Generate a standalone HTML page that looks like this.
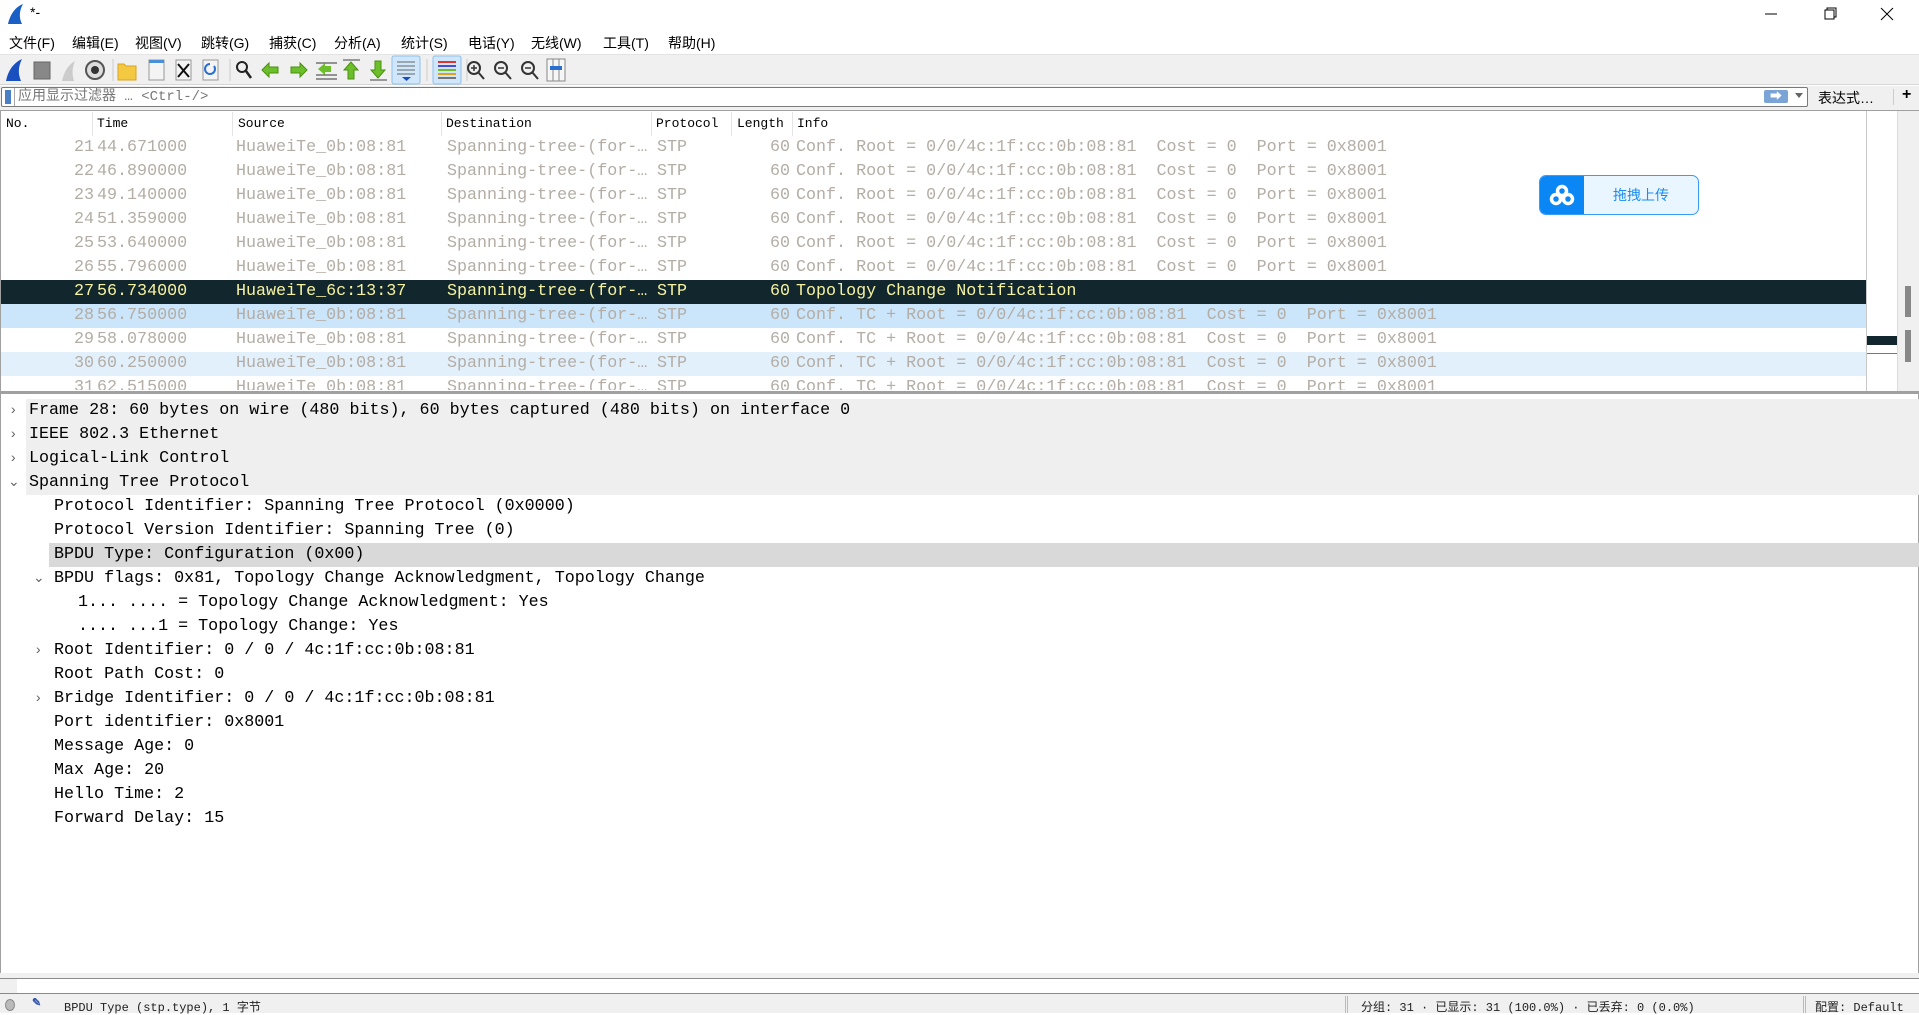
<!DOCTYPE html>
<html><head><meta charset="utf-8">
<style>
*{margin:0;padding:0;box-sizing:border-box}
body{width:1919px;height:1013px;overflow:hidden;background:#fff;position:relative;font-family:"Liberation Sans","Noto Sans CJK SC",sans-serif;}
.a{position:absolute;white-space:pre}
.menu{font-size:14px;top:33px;color:#000}
.mono{font-family:"Liberation Mono","Noto Sans CJK SC",monospace}
.row{position:absolute;left:0;width:1866px;height:24px;font-family:"Liberation Mono",monospace;font-size:16.7px;line-height:24px;color:#b3ada5}
.row span{position:absolute;white-space:pre;top:0}
.d{position:absolute;left:0;width:1919px;height:24px;font-family:"Liberation Mono",monospace;font-size:16.7px;line-height:24px;color:#000}
.d span{position:absolute;white-space:pre;top:0}
.arr{color:#666;font-size:14px}
.hd span{position:absolute;top:0;white-space:pre}
</style></head><body>
<!-- title bar -->
<svg class="a" style="left:6px;top:3px" width="20" height="22" viewBox="0 0 20 22"><path d="M2 21 C4 12 9 4 17 1 C13 8 13 15 16 21 Z" fill="#1a5fc6"/></svg>
<div class="a" style="left:30px;top:4px;font-size:14px">*-</div>
<svg class="a" style="left:1763px;top:6px" width="140" height="16"><line x1="2" y1="8" x2="14" y2="8" stroke="#000"/><rect x="62" y="4" width="9" height="9" fill="none" stroke="#000"/><path d="M64 4V2h9v9h-2" fill="none" stroke="#000"/><path d="M118 2l12 12M130 2l-12 12" stroke="#000"/></svg>
<!-- menu -->
<div class="a menu" style="left:9px">文件(F)</div>
<div class="a menu" style="left:72px">编辑(E)</div>
<div class="a menu" style="left:135px">视图(V)</div>
<div class="a menu" style="left:201px">跳转(G)</div>
<div class="a menu" style="left:269px">捕获(C)</div>
<div class="a menu" style="left:334px">分析(A)</div>
<div class="a menu" style="left:401px">统计(S)</div>
<div class="a menu" style="left:468px">电话(Y)</div>
<div class="a menu" style="left:531px">无线(W)</div>
<div class="a menu" style="left:603px">工具(T)</div>
<div class="a menu" style="left:668px">帮助(H)</div>
<!-- toolbar -->
<div class="a" style="left:0;top:54px;width:1919px;height:31px;background:#f0f0f0;border-top:1px solid #e3e3e3;border-bottom:1px solid #d6d6d6"></div>
<svg class="a" style="left:0;top:55px" width="580" height="30" viewBox="0 0 580 30">
<path d="M6 26 C8 16 13 8 22 4 C18 12 18 19 21 26 Z" fill="#1a4fc0"/>
<rect x="34" y="7" width="16" height="17" fill="#888" stroke="#666"/>
<path d="M62 26 C64 17 68 10 75 6 C72 13 72 19 74 26 Z" fill="#ccc"/>
<circle cx="95" cy="15" r="9" fill="#ddd" stroke="#555" stroke-width="2"/><circle cx="95" cy="15" r="4" fill="#333"/>
<line x1="113" y1="4" x2="113" y2="26" stroke="#ccc"/>
<path d="M118 9h6l2 2h10v14h-18z" fill="#f5c842" stroke="#d9a520"/>
<rect x="149" y="5" width="15" height="20" fill="#f4f4f4" stroke="#999"/><rect x="149" y="5" width="15" height="3" fill="#4a90d9"/>
<rect x="176" y="5" width="15" height="20" fill="#f4f4f4" stroke="#999"/><path d="M178 9l11 13M189 9l-11 13" stroke="#111" stroke-width="2"/>
<rect x="203" y="5" width="15" height="20" fill="#f4f4f4" stroke="#999"/><path d="M214 11a5 5 0 1 1 -4 -2" fill="none" stroke="#2a6fd0" stroke-width="2"/>
<line x1="230" y1="4" x2="230" y2="26" stroke="#ccc"/>
<circle cx="242" cy="12" r="5" fill="none" stroke="#222" stroke-width="2"/><line x1="246" y1="16" x2="251" y2="23" stroke="#222" stroke-width="2.5"/>
<path d="M262 15l7-7v4h9v6h-9v4z" fill="#6cbf2a" stroke="#4a9010"/>
<path d="M307 15l-7-7v4h-9v6h9v4z" fill="#6cbf2a" stroke="#4a9010"/>
<g stroke="#333"><line x1="316" y1="8" x2="337" y2="8"/><line x1="316" y1="20" x2="337" y2="20"/><line x1="316" y1="24" x2="337" y2="24"/></g><path d="M318 14l7-6v3h6v6h-6v3z" fill="#6cbf2a"/>
<line x1="343" y1="5" x2="360" y2="5" stroke="#999" stroke-width="2"/><path d="M351 7l-7 8h4v9h6v-9h4z" fill="#6cbf2a" stroke="#4a9010"/>
<line x1="370" y1="25" x2="387" y2="25" stroke="#999" stroke-width="2"/><path d="M378 23l-7-8h4v-9h6v9h4z" fill="#6cbf2a" stroke="#4a9010"/>
<rect x="392" y="1" width="28" height="28" rx="2" fill="#cfe6fb" stroke="#8cc0ee"/><g stroke="#666"><line x1="397" y1="7" x2="415" y2="7"/><line x1="397" y1="11" x2="415" y2="11"/><line x1="397" y1="15" x2="415" y2="15"/><line x1="397" y1="19" x2="415" y2="19"/></g><path d="M402 22h9l-4.5 4z" fill="#1a4fc0"/>
<line x1="427" y1="4" x2="427" y2="26" stroke="#ccc"/>
<rect x="433" y="1" width="28" height="28" rx="2" fill="#cfe6fb" stroke="#8cc0ee"/><line x1="438" y1="7" x2="456" y2="7" stroke="#d33" stroke-width="2"/><line x1="438" y1="11" x2="456" y2="11" stroke="#4a4ad0" stroke-width="2"/><line x1="438" y1="15" x2="456" y2="15" stroke="#6cbf2a" stroke-width="2"/><line x1="438" y1="19" x2="456" y2="19" stroke="#e0a020" stroke-width="2"/><line x1="438" y1="23" x2="456" y2="23" stroke="#777" stroke-width="2"/>
<line x1="467" y1="4" x2="467" y2="26" stroke="#ccc"/>
<g fill="none" stroke="#333" stroke-width="2"><circle cx="474" cy="13" r="6"/><line x1="478" y1="17" x2="484" y2="24"/><circle cx="501" cy="13" r="6"/><line x1="505" y1="17" x2="511" y2="24"/><circle cx="528" cy="13" r="6"/><line x1="532" y1="17" x2="538" y2="24"/></g>
<path d="M471 13h6M474 10v6M498 13h6M525 13h6" stroke="#333" stroke-width="1.5"/>
<rect x="547" y="4" width="18" height="22" fill="#f6f6f6" stroke="#888"/><line x1="553" y1="4" x2="553" y2="26" stroke="#888"/><line x1="559" y1="4" x2="559" y2="26" stroke="#888"/><rect x="550" y="11" width="12" height="4" fill="#2a6fd0"/>
</svg>
<!-- filter bar -->
<div class="a" style="left:0;top:86px;width:1919px;height:24px;background:#f0f0f0"></div>
<div class="a" style="left:1px;top:87px;width:1807px;height:20px;background:#fff;border:1px solid #7a7a7a;border-radius:2px"></div>
<div class="a" style="left:5px;top:90px;width:6px;height:14px;background:#4b7fc4"></div>
<div class="a" style="left:14px;top:88px;width:1px;height:18px;background:#aaa"></div>
<div class="a mono" style="left:18px;top:88px;font-size:14px;line-height:18px;color:#777">应用显示过滤器 … &lt;Ctrl-/&gt;</div>
<div class="a" style="left:1764px;top:90px;width:24px;height:13px;background:#7aa3d6;border-radius:2px;color:#fff;font-size:12px;line-height:13px;text-align:center">➡</div>
<div class="a" style="left:1795px;top:93px;width:0;height:0;border-left:4px solid transparent;border-right:4px solid transparent;border-top:5px solid #666"></div>
<div class="a" style="left:1818px;top:88px;font-size:14px">表达式…</div>
<div class="a" style="left:1893px;top:89px;width:1px;height:16px;background:#ccc"></div>
<div class="a" style="left:1902px;top:86px;font-size:16px;font-weight:bold">+</div>
<!-- packet list -->
<div class="a" style="left:0;top:110px;width:1919px;height:282px;border-top:1px solid #a0a0a0;border-bottom:1px solid #a0a0a0;border-left:1px solid #a0a0a0"></div>
<div class="a mono hd" style="left:0;top:112px;width:1866px;height:24px;font-size:13px;line-height:24px">
<span style="left:6px">No.</span><span style="left:97px">Time</span><span style="left:238px">Source</span><span style="left:446px">Destination</span><span style="left:656px">Protocol</span><span style="left:737px">Length</span><span style="left:797px">Info</span>
<span style="left:92px;width:1px;height:24px;background:#e4e4e4"></span><span style="left:232px;width:1px;height:24px;background:#e4e4e4"></span><span style="left:441px;width:1px;height:24px;background:#e4e4e4"></span><span style="left:651px;width:1px;height:24px;background:#e4e4e4"></span><span style="left:731px;width:1px;height:24px;background:#e4e4e4"></span><span style="left:792px;width:1px;height:24px;background:#e4e4e4"></span>
</div>
<div class="a" style="left:1px;top:136px;width:1865px;height:254px;overflow:hidden">
<div class="row" style="top:0"><span style="right:1773px">21</span><span style="left:96px">44.671000</span><span style="left:235px">HuaweiTe_0b:08:81</span><span style="left:446px">Spanning-tree-(for-…</span><span style="left:656px">STP</span><span style="right:1077px">60</span><span style="left:795px">Conf. Root = 0/0/4c:1f:cc:0b:08:81  Cost = 0  Port = 0x8001</span></div>
<div class="row" style="top:24px"><span style="right:1773px">22</span><span style="left:96px">46.890000</span><span style="left:235px">HuaweiTe_0b:08:81</span><span style="left:446px">Spanning-tree-(for-…</span><span style="left:656px">STP</span><span style="right:1077px">60</span><span style="left:795px">Conf. Root = 0/0/4c:1f:cc:0b:08:81  Cost = 0  Port = 0x8001</span></div>
<div class="row" style="top:48px"><span style="right:1773px">23</span><span style="left:96px">49.140000</span><span style="left:235px">HuaweiTe_0b:08:81</span><span style="left:446px">Spanning-tree-(for-…</span><span style="left:656px">STP</span><span style="right:1077px">60</span><span style="left:795px">Conf. Root = 0/0/4c:1f:cc:0b:08:81  Cost = 0  Port = 0x8001</span></div>
<div class="row" style="top:72px"><span style="right:1773px">24</span><span style="left:96px">51.359000</span><span style="left:235px">HuaweiTe_0b:08:81</span><span style="left:446px">Spanning-tree-(for-…</span><span style="left:656px">STP</span><span style="right:1077px">60</span><span style="left:795px">Conf. Root = 0/0/4c:1f:cc:0b:08:81  Cost = 0  Port = 0x8001</span></div>
<div class="row" style="top:96px"><span style="right:1773px">25</span><span style="left:96px">53.640000</span><span style="left:235px">HuaweiTe_0b:08:81</span><span style="left:446px">Spanning-tree-(for-…</span><span style="left:656px">STP</span><span style="right:1077px">60</span><span style="left:795px">Conf. Root = 0/0/4c:1f:cc:0b:08:81  Cost = 0  Port = 0x8001</span></div>
<div class="row" style="top:120px"><span style="right:1773px">26</span><span style="left:96px">55.796000</span><span style="left:235px">HuaweiTe_0b:08:81</span><span style="left:446px">Spanning-tree-(for-…</span><span style="left:656px">STP</span><span style="right:1077px">60</span><span style="left:795px">Conf. Root = 0/0/4c:1f:cc:0b:08:81  Cost = 0  Port = 0x8001</span></div>
<div class="row" style="top:144px;background:#12262e;color:#f6f3a0"><span style="right:1773px">27</span><span style="left:96px">56.734000</span><span style="left:235px">HuaweiTe_6c:13:37</span><span style="left:446px">Spanning-tree-(for-…</span><span style="left:656px">STP</span><span style="right:1077px">60</span><span style="left:795px">Topology Change Notification</span></div>
<div class="row" style="top:168px;background:#cbe5fa"><span style="right:1773px">28</span><span style="left:96px">56.750000</span><span style="left:235px">HuaweiTe_0b:08:81</span><span style="left:446px">Spanning-tree-(for-…</span><span style="left:656px">STP</span><span style="right:1077px">60</span><span style="left:795px">Conf. TC + Root = 0/0/4c:1f:cc:0b:08:81  Cost = 0  Port = 0x8001</span></div>
<div class="row" style="top:192px"><span style="right:1773px">29</span><span style="left:96px">58.078000</span><span style="left:235px">HuaweiTe_0b:08:81</span><span style="left:446px">Spanning-tree-(for-…</span><span style="left:656px">STP</span><span style="right:1077px">60</span><span style="left:795px">Conf. TC + Root = 0/0/4c:1f:cc:0b:08:81  Cost = 0  Port = 0x8001</span></div>
<div class="row" style="top:216px;background:#e2f0fc"><span style="right:1773px">30</span><span style="left:96px">60.250000</span><span style="left:235px">HuaweiTe_0b:08:81</span><span style="left:446px">Spanning-tree-(for-…</span><span style="left:656px">STP</span><span style="right:1077px">60</span><span style="left:795px">Conf. TC + Root = 0/0/4c:1f:cc:0b:08:81  Cost = 0  Port = 0x8001</span></div>
<div class="row" style="top:240px"><span style="right:1773px">31</span><span style="left:96px">62.515000</span><span style="left:235px">HuaweiTe_0b:08:81</span><span style="left:446px">Spanning-tree-(for-…</span><span style="left:656px">STP</span><span style="right:1077px">60</span><span style="left:795px">Conf. TC + Root = 0/0/4c:1f:cc:0b:08:81  Cost = 0  Port = 0x8001</span></div>
</div>
<!-- minimap / scrollbar -->
<div class="a" style="left:1866px;top:111px;width:1px;height:280px;background:#c8c8c8"></div>
<div class="a" style="left:1867px;top:336px;width:30px;height:9px;background:#12262e"></div>
<div class="a" style="left:1867px;top:353px;width:30px;height:1px;background:#3a86d6"></div>
<div class="a" style="left:1897px;top:111px;width:22px;height:280px;background:#f0f0f0;border-left:1px solid #ddd"></div>
<div class="a" style="left:1905px;top:286px;width:6px;height:31px;background:#888"></div>
<div class="a" style="left:1905px;top:330px;width:6px;height:32px;background:#888"></div>
<!-- baidu button -->
<div class="a" style="left:1539px;top:175px;width:160px;height:40px;border:1px solid #3a9bf5;border-radius:7px;background:#eaf6ff;overflow:hidden">
<div class="a" style="left:0;top:0;width:44px;height:38px;background:#0a86f5"></div>
<svg class="a" style="left:9px;top:8px" width="26" height="22"><g fill="none" stroke="#fff" stroke-width="3.5"><circle cx="13" cy="7" r="4.5"/><circle cx="7" cy="15" r="4.5"/><circle cx="19" cy="15" r="4.5"/></g></svg>
<div class="a" style="left:44px;top:0;width:114px;line-height:38px;text-align:center;color:#1a8cf0;font-size:14px">拖拽上传</div>
</div>
<!-- detail pane -->
<div class="a" style="left:0;top:392px;width:1919px;height:583px;border:1px solid #a0a0a0;border-top:2px solid #a0a0a0"></div>
<div class="d" style="top:399px"><span style="left:26px;width:1893px;height:24px;background:#efefef"></span><span class="arr" style="left:9px">›</span><span style="left:29px">Frame 28: 60 bytes on wire (480 bits), 60 bytes captured (480 bits) on interface 0</span></div>
<div class="d" style="top:423px"><span style="left:26px;width:1893px;height:24px;background:#efefef"></span><span class="arr" style="left:9px">›</span><span style="left:29px">IEEE 802.3 Ethernet</span></div>
<div class="d" style="top:447px"><span style="left:26px;width:1893px;height:24px;background:#efefef"></span><span class="arr" style="left:9px">›</span><span style="left:29px">Logical-Link Control</span></div>
<div class="d" style="top:471px"><span style="left:26px;width:1893px;height:24px;background:#efefef"></span><span class="arr" style="left:8px">⌄</span><span style="left:29px">Spanning Tree Protocol</span></div>
<div class="d" style="top:495px"><span style="left:54px">Protocol Identifier: Spanning Tree Protocol (0x0000)</span></div>
<div class="d" style="top:519px"><span style="left:54px">Protocol Version Identifier: Spanning Tree (0)</span></div>
<div class="d" style="top:543px"><span style="left:49px;width:1870px;height:24px;background:#d9d9d9"></span><span style="left:54px">BPDU Type: Configuration (0x00)</span></div>
<div class="d" style="top:567px"><span class="arr" style="left:33px">⌄</span><span style="left:54px">BPDU flags: 0x81, Topology Change Acknowledgment, Topology Change</span></div>
<div class="d" style="top:591px"><span style="left:78px">1... .... = Topology Change Acknowledgment: Yes</span></div>
<div class="d" style="top:615px"><span style="left:78px">.... ...1 = Topology Change: Yes</span></div>
<div class="d" style="top:639px"><span class="arr" style="left:34px">›</span><span style="left:54px">Root Identifier: 0 / 0 / 4c:1f:cc:0b:08:81</span></div>
<div class="d" style="top:663px"><span style="left:54px">Root Path Cost: 0</span></div>
<div class="d" style="top:687px"><span class="arr" style="left:34px">›</span><span style="left:54px">Bridge Identifier: 0 / 0 / 4c:1f:cc:0b:08:81</span></div>
<div class="d" style="top:711px"><span style="left:54px">Port identifier: 0x8001</span></div>
<div class="d" style="top:735px"><span style="left:54px">Message Age: 0</span></div>
<div class="d" style="top:759px"><span style="left:54px">Max Age: 20</span></div>
<div class="d" style="top:783px"><span style="left:54px">Hello Time: 2</span></div>
<div class="d" style="top:807px"><span style="left:54px">Forward Delay: 15</span></div>
<!-- bytes pane -->
<div class="a" style="left:0;top:973px;width:1919px;height:5px;background:#f0f0f0"></div>
<div class="a" style="left:0;top:978px;width:1919px;height:16px;background:#fff;border-top:1px solid #8a8a8a;border-bottom:1px solid #8a8a8a"></div>
<div class="a" style="left:0;top:979px;width:17px;height:14px;background:#f0f0f0"></div>
<!-- status bar -->
<div class="a" style="left:0;top:994px;width:1919px;height:19px;background:#f0f0f0"></div>
<div class="a" style="left:5px;top:999px;width:10px;height:12px;border-radius:50%;background:#bbb;border:1px solid #888"></div>
<div class="a" style="left:32px;top:996px;font-size:11px;color:#3355aa;font-weight:bold">✎</div>
<div class="a mono" style="left:64px;top:998px;font-size:12px;color:#222">BPDU Type (stp.type), 1 字节</div>
<div class="a" style="left:1345px;top:996px;width:3px;height:17px;border-left:1px solid #bbb;border-right:1px solid #bbb"></div>
<div class="a mono" style="left:1361px;top:998px;font-size:12px;color:#222">分组: 31 · 已显示: 31 (100.0%) · 已丢弃: 0 (0.0%)</div>
<div class="a" style="left:1803px;top:996px;width:3px;height:17px;border-left:1px solid #bbb;border-right:1px solid #bbb"></div>
<div class="a mono" style="left:1815px;top:998px;font-size:12px;color:#222">配置: Default</div>
</body></html>
